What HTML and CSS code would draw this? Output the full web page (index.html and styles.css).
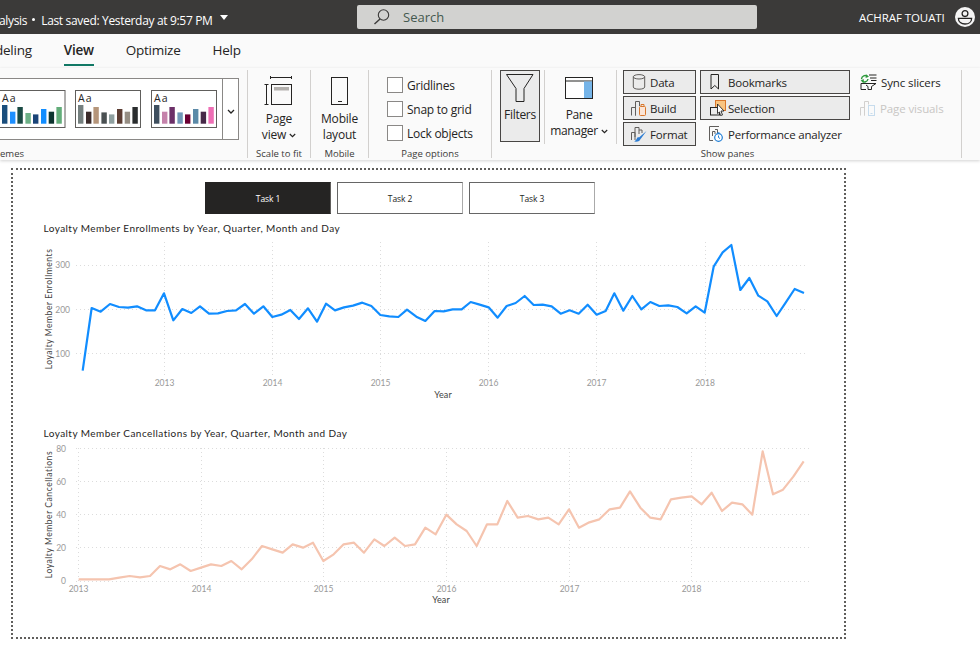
FILE: index.html
```html
<!DOCTYPE html>
<html lang="en">
<head>
<meta charset="utf-8">
<title>Power BI Desktop</title>
<link rel="stylesheet" href="styles.css">
</head>
<body>
<header class="topbar">
  <div class="doc-title"><span class="doc-clip">alysis</span><span class="doc-dot"></span><span>Last saved: Yesterday at 9:57 PM</span><span class="doc-caret"></span></div>
  <div class="search">
    <svg class="search-icon" width="18" height="18" viewBox="0 0 18 18"><circle cx="10.5" cy="7" r="5.2" fill="none" stroke="#3b3a39" stroke-width="1.1"/><path d="M7 11 L1.5 16" stroke="#3b3a39" stroke-width="1.4"/></svg>
    <span class="search-text">Search</span>
  </div>
  <div class="user">ACHRAF TOUATI</div>
  <svg class="avatar" width="20" height="20" viewBox="0 0 20 20"><circle cx="10" cy="10" r="10" fill="#f4f4f4"/><circle cx="10" cy="6.6" r="2.9" fill="none" stroke="#252423" stroke-width="1.3"/><path d="M3.4 11.4 H16.6 C16.6 15 13.6 17 10 17 C6.4 17 3.4 15 3.4 11.4 Z" fill="none" stroke="#252423" stroke-width="1.3"/></svg>
</header>

<nav class="tabs">
  <span class="tab tab-clip">deling</span>
  <span class="tab tab-active">View</span>
  <span class="tab">Optimize</span>
  <span class="tab">Help</span>
</nav>

<section class="ribbon">
  <div class="group group-themes">
    <div class="group-body">
      <div class="themes">
        <svg class="theme-cards" width="222" height="60" viewBox="0 79 222 60">
          <rect x="-10" y="90.5" width="75" height="37" fill="#fff" stroke="#605e5c"/>
          <text x="2" y="102" class="aa">Aa</text>
          <g>
            <rect x="2" y="105" width="5.4" height="18.7" fill="#1a4e7c"/><rect x="10" y="111.7" width="5.4" height="12" fill="#1f8fff"/><rect x="17.4" y="107" width="5.4" height="16.7" fill="#1a4a44"/><rect x="25.4" y="113" width="5.4" height="10.7" fill="#6cb086"/><rect x="33" y="114.4" width="5.4" height="9.3" fill="#1a4478"/><rect x="41" y="109" width="5.4" height="14.7" fill="#118dff"/><rect x="48.7" y="111.7" width="5.4" height="12" fill="#0e3530"/><rect x="56.4" y="107" width="5.4" height="16.7" fill="#63ad7a"/>
          </g>
          <rect x="75.5" y="90.5" width="65" height="37" fill="#fff" stroke="#605e5c"/>
          <text x="78" y="102" class="aa">Aa</text>
          <g>
            <rect x="78" y="105" width="5.4" height="18.7" fill="#75807f"/><rect x="86" y="111.7" width="5.4" height="12" fill="#3c2c2b"/><rect x="93.4" y="107" width="5.4" height="16.7" fill="#b5957a"/><rect x="101.4" y="112.4" width="5.4" height="11.3" fill="#4a5052"/><rect x="109" y="114.4" width="5.4" height="9.3" fill="#8fa0a0"/><rect x="117" y="109" width="5.4" height="14.7" fill="#5c3d33"/><rect x="124.7" y="111.7" width="5.4" height="12" fill="#968e84"/><rect x="132.4" y="107" width="5.4" height="16.7" fill="#2a2d2e"/>
          </g>
          <rect x="151.5" y="90.5" width="65" height="37" fill="#fff" stroke="#605e5c"/>
          <text x="154" y="102" class="aa">Aa</text>
          <g>
            <rect x="154" y="105" width="5.4" height="18.7" fill="#3f4f5e"/><rect x="162" y="111.7" width="5.4" height="12" fill="#c582ab"/><rect x="169.4" y="107" width="5.4" height="16.7" fill="#6c3068"/><rect x="177.4" y="112.4" width="5.4" height="11.3" fill="#7098b8"/><rect x="185" y="114.4" width="5.4" height="9.3" fill="#6b0033"/><rect x="193" y="109" width="5.4" height="14.7" fill="#5b8aa8"/><rect x="200.7" y="111.7" width="5.4" height="12" fill="#472948"/><rect x="208.4" y="107" width="5.4" height="16.7" fill="#ee6fb5"/>
          </g>
        </svg>
        <div class="themes-more"><svg width="8" height="5" viewBox="0 0 8 5"><path d="M1 1 L4 4 L7 1" fill="none" stroke="#252423" stroke-width="1.3"/></svg></div>
      </div>
    </div>
    <div class="group-label label-themes">emes</div>
  </div>

  <div class="group group-scale">
    <div class="group-body stack">
      <svg width="30" height="30" viewBox="0 0 30 30" class="big-icon"><path d="M6.5 1 V4 M27.5 1 V4 M6.5 2.5 H27.5 M.5 9.5 H4.5 M.5 29.5 H4.5 M2.5 9.5 V29.5" fill="none" stroke="#252423"/><rect x="7.5" y="9.5" width="20" height="20" fill="none" stroke="#252423"/><rect x="10" y="12" width="15" height="3.5" fill="#b3b0ad"/></svg>
      <div class="big-label">Page<br>view<svg class="mini-caret" width="7" height="5" viewBox="0 0 7 5"><path d="M.8 1 L3.5 3.6 L6.2 1" fill="none" stroke="#252423" stroke-width="1.2"/></svg></div>
    </div>
    <div class="group-label">Scale to fit</div>
  </div>

  <div class="group group-mobile">
    <div class="group-body stack">
      <svg width="18" height="29" viewBox="0 0 18 29" class="big-icon phone"><rect x=".5" y=".5" width="16" height="27" fill="none" stroke="#252423"/><path d="M7 24.5 H11" stroke="#252423"/></svg>
      <div class="big-label">Mobile<br>layout</div>
    </div>
    <div class="group-label">Mobile</div>
  </div>

  <div class="group group-options">
    <div class="group-body checks">
      <label class="check"><span class="box"></span>Gridlines</label>
      <label class="check"><span class="box"></span>Snap to grid</label>
      <label class="check"><span class="box"></span>Lock objects</label>
    </div>
    <div class="group-label">Page options</div>
  </div>

  <div class="group group-panes">
    <div class="group-body panes">
      <div class="filters">
        <svg width="28" height="29" viewBox="0 0 28 29"><path d="M.5 .5 H27 L18 14.5 V27.5 H10 V14.5 Z" fill="none" stroke="#252423"/></svg>
        <span class="filters-label">Filters</span>
      </div>
      <div class="pane-manager">
        <svg width="29" height="23" viewBox="0 0 29 23"><rect x=".5" y=".5" width="27" height="21" fill="#fff" stroke="#252423"/><path d="M.5 4 H27.5" stroke="#252423"/><rect x="19" y="4.5" width="8" height="16.5" fill="#75b4e8"/></svg>
        <div class="big-label">Pane<br>manager<svg class="mini-caret" width="7" height="5" viewBox="0 0 7 5"><path d="M.8 1 L3.5 3.6 L6.2 1" fill="none" stroke="#252423" stroke-width="1.2"/></svg></div>
      </div>
      <div class="show-grid">
        <div class="pbtn on">
          <svg width="14" height="16" viewBox="0 0 14 16"><ellipse cx="7" cy="2.8" rx="5.7" ry="2.2" fill="none" stroke="#605e5c"/><path d="M1.3 2.8 V13 C1.3 14.3 3.8 15.2 7 15.2 C10.2 15.2 12.7 14.3 12.7 13 V2.8" fill="none" stroke="#605e5c"/></svg>
          <span>Data</span>
        </div>
        <div class="pbtn on wide">
          <svg class="ic-book" width="10" height="16" viewBox="0 0 10 16"><path d="M1 .5 H8.5 V15 L4.8 11.5 L1 15 Z" fill="none" stroke="#252423"/></svg>
          <span class="bk-text">Bookmarks</span>
        </div>
        <div class="side-btn">
          <svg width="17" height="16" viewBox="0 0 17 16"><path d="M9 1 H16.5 M10 4 H16.5 M11 6.5 H16.5 M1 9.5 H16 L11.5 12.5 V15.5 H8 V12.5 L6 11 M1 9.5 V15.5 H6" fill="none" stroke="#252423"/><path d="M1.5 5 A3.6 3.6 0 0 1 7.5 2.5 M8 5 A3.6 3.6 0 0 1 2 7" fill="none" stroke="#2d9a3c" stroke-width="1.4"/><path d="M6 .2 L9 2.8 L5.6 4 Z M3.4 9 L.6 6 L4 5.2 Z" fill="#2d9a3c"/></svg>
          <span>Sync slicers</span>
        </div>
        <div class="pbtn on tight">
          <svg width="16" height="16" viewBox="0 0 16 16"><path d="M.5 15.5 V7.5 H4.5 V15.5 M4.5 15.5 V1.5 H8.5 V6" fill="none" stroke="#605e5c"/><rect x="8.5" y="6.5" width="6" height="9" rx="1" fill="#fbe5d6" stroke="#d9772b"/><path d="M10 6 V4.5 H13 V6" fill="none" stroke="#d9772b"/></svg>
          <span>Build</span>
        </div>
        <div class="pbtn on wide">
          <svg class="ic-sel" width="16" height="16" viewBox="0 0 16 16"><rect x="5.5" y=".5" width="10" height="10" fill="#f9c480" stroke="#d9772b"/><rect x=".5" y="7.5" width="9" height="7.5" fill="#ececec" stroke="#252423"/><path d="M7.5 4 L14 11 L11 11 L12.5 15 L10.5 15.5 L9.5 12 L7.5 13.5 Z" fill="#fff" stroke="#252423" stroke-width=".9"/></svg>
          <span class="bk-text sel-text">Selection</span>
        </div>
        <div class="side-btn off">
          <svg width="16" height="16" viewBox="0 0 16 16"><path d="M.5 15.5 V7.5 H4.5 V15.5 M4.5 15.5 V1.5 H8.5 V4.5" fill="none" stroke="#d2d0ce"/><rect x="8.5" y="5.5" width="6" height="10" fill="none" stroke="#c7dced"/><path d="M10.5 13.5 H12.5" stroke="#c7dced"/></svg>
          <span>Page visuals</span>
        </div>
        <div class="pbtn on tight">
          <svg width="16" height="16" viewBox="0 0 16 16"><path d="M.5 14 V6.5 H4 V14 M4 11 V1.5 H8 V8 M8 4 H11 V7" fill="none" stroke="#605e5c"/><path d="M15.5 5 L8 11.5 L7 11 C5.5 12 6 14 3 15.5 C7 16 9 15 9.5 13 L10 12.5 Z" fill="#2b7cd3"/></svg>
          <span>Format</span>
        </div>
        <div class="pbtn plain">
          <svg class="ic-perf" width="14" height="16" viewBox="0 0 14 16"><path d="M.5 .5 H10 M.5 .5 V14.5 H4 M3.5 10 V5.5 H6 V8 M6 3.5 H8.5 V7" fill="none" stroke="#605e5c"/><circle cx="9.5" cy="11.5" r="3.8" fill="#fff" stroke="#1c7cd5" stroke-width="1.2"/><path d="M9.5 9.5 V11.5 L11 12.5 M8.5 6.8 H10.5" fill="none" stroke="#1c7cd5"/></svg>
          <span>Performance analyzer</span>
        </div>
      </div>
    </div>
    <div class="group-label label-show">Show panes</div>
  </div>
</section>

<main class="page">
  <div class="task-tabs">
    <div class="task active">Task 1</div>
    <div class="task">Task 2</div>
    <div class="task">Task 3</div>
  </div>

  <svg class="chart chart-a" width="830" height="187" viewBox="13 218 830 187">
    <text x="43.5" y="232" class="c-title">Loyalty Member Enrollments by Year, Quarter, Month and Day</text>
    <g class="grid">
      <path d="M76 265.5 H808 M76 309.5 H808 M76 353.5 H808"/>
      <path d="M164.5 242 V375 M272.5 242 V375 M380.5 242 V375 M488.5 242 V375 M596.5 242 V375 M705.5 242 V375"/>
    </g>
    <g class="tick">
      <text x="70" y="268" text-anchor="end">300</text><text x="70" y="312.5" text-anchor="end">200</text><text x="70" y="357" text-anchor="end">100</text>
      <text x="164.5" y="386" text-anchor="middle">2013</text><text x="272.5" y="386" text-anchor="middle">2014</text><text x="380.5" y="386" text-anchor="middle">2015</text><text x="488.5" y="386" text-anchor="middle">2016</text><text x="596.5" y="386" text-anchor="middle">2017</text><text x="705" y="386" text-anchor="middle">2018</text>
    </g>
    <text x="443" y="398" class="a-title" text-anchor="middle">Year</text>
    <text transform="translate(52 309) rotate(-90)" class="a-title y-title" text-anchor="middle">Loyalty Member Enrollments</text>
    <g transform="translate(0 165) scale(.33333)">
      <polyline class="line line-blue" points="248,617 275,429 302,440 330,417 357,426 384,428 411,424 438,436 465,436 492,385 520,466 547,432 574,444 600,424 627,446 654,445 681,438 708,436 735,417 762,446 790,424 817,456 844,449 871,435 897,462 924,430 951,470 978,416 1005,436 1032,427 1059,422 1087,413 1114,423 1141,450 1168,454 1195,456 1221,434 1249,455 1276,468 1304,438 1331,439 1358,433 1385,433 1412,411 1439,419 1466,427 1493,458 1520,423 1547,414 1574,393 1601,420 1628,419 1655,424 1682,446 1709,436 1736,446 1763,419 1790,449 1817,438 1843,385 1870,437 1897,393 1924,433 1951,411 1978,423 2005,421 2032,426 2060,445 2087,424 2114,443 2141,305 2168,262 2194,240 2221,375 2248,339 2275,392 2302,409 2330,453 2357,413 2384,372 2412,384"/>
    </g>
  </svg>

  <svg class="chart chart-b" width="830" height="185" viewBox="13 420 830 185">
    <text x="43.5" y="437" class="c-title">Loyalty Member Cancellations by Year, Quarter, Month and Day</text>
    <g class="grid">
      <path d="M76 448.5 H810 M76 481.5 H810 M76 514.5 H810 M76 547.5 H810 M76 581.5 H810"/>
      <path d="M78.5 448 V581 M201.5 448 V581 M323.5 448 V581 M446.5 448 V581 M569.5 448 V581 M691.5 448 V581"/>
    </g>
    <g class="tick">
      <text x="66" y="451.5" text-anchor="end">80</text><text x="66" y="484.5" text-anchor="end">60</text><text x="66" y="518" text-anchor="end">40</text><text x="66" y="551" text-anchor="end">20</text><text x="66" y="584" text-anchor="end">0</text>
      <text x="78.5" y="591.5" text-anchor="middle">2013</text><text x="201.5" y="591.5" text-anchor="middle">2014</text><text x="323.5" y="591.5" text-anchor="middle">2015</text><text x="446.5" y="591.5" text-anchor="middle">2016</text><text x="569.5" y="591.5" text-anchor="middle">2017</text><text x="691.5" y="591.5" text-anchor="middle">2018</text>
    </g>
    <text x="441" y="603" class="a-title" text-anchor="middle">Year</text>
    <text transform="translate(52 514.5) rotate(-90)" class="a-title y-title" text-anchor="middle">Loyalty Member Cancellations</text>
    <g transform="translate(0 420) scale(.33333)">
      <polyline class="line line-peach" points="236,478 266,478 297,478 327,478 358,473 389,468 420,472 450,468 480,438 511,448 541,433 572,453 603,443 633,433 664,438 694,423 725,448 755,418 786,378 817,388 848,398 878,373 909,383 939,368 970,423 1001,403 1031,373 1062,368 1092,398 1123,358 1153,378 1184,353 1215,378 1245,373 1276,323 1307,343 1339,284 1370,313 1400,333 1430,378 1461,313 1492,313 1522,243 1553,293 1584,288 1615,298 1645,293 1676,313 1707,268 1737,323 1768,307 1798,298 1829,268 1860,263 1890,214 1921,263 1951,293 1982,298 2013,238 2044,233 2075,229 2105,253 2135,218 2166,273 2196,248 2227,253 2257,284 2288,94 2319,223 2349,209 2380,170 2411,124"/>
    </g>
  </svg>
</main>
</body>
</html>
```
FILE: styles.css
```css
* { box-sizing: border-box; }
html, body { margin: 0; height: 100%; }
body {
  width: 980px;
  height: 650px;
  overflow: hidden;
  background: #fff;
  color: #252423;
  font-family: "Open Sans", "Noto Sans", sans-serif;
  font-size: 12px;
}

/* title bar */
.topbar {
  display: flex;
  align-items: center;
  height: 34px;
  background: #3b3a39;
  color: #fff;
}
.doc-title {
  display: flex;
  align-items: center;
  width: 357px;
  height: 34px;
  padding-top: 6px;
  font-size: 12px;
  letter-spacing: -.33px;
  white-space: nowrap;
}
.doc-clip { margin-left: -1px; }
.doc-dot {
  width: 3px;
  height: 3px;
  margin: 0 6px 2px 5px;
  background: #fff;
  border-radius: 50%;
}
.doc-caret {
  width: 0;
  height: 0;
  margin: -6px 0 0 7px;
  border: 4.5px solid transparent;
  border-top: 5px solid #fff;
  border-bottom: 0;
}
.search {
  display: flex;
  align-items: center;
  width: 400px;
  height: 24px;
  padding-left: 16px;
  background: #d2d2d0;
  border-radius: 2px;
}
.search-text {
  margin-left: 12px;
  color: #44594f;
  font-size: 13px;
}
.user {
  margin-left: 102px;
  font-size: 11.5px;
  letter-spacing: -.08px;
  white-space: nowrap;
}
.avatar { margin-left: 10px; flex: none; }

/* tab strip */
.tabs {
  display: flex;
  height: 34px;
  background: #fafafa;
}
.tab {
  height: 30px;
  padding-top: 7px;
  margin-right: 32px;
  font-size: 13.5px;
  line-height: 19px;
  letter-spacing: -.25px;
}
.tab-clip { margin-left: -5px; }
.tab-active {
  font-weight: 600;
  border-bottom: 2px solid #117865;
  height: 32px;
}

/* ribbon */
.ribbon {
  display: flex;
  height: 92px;
  background: #fafafa;
  box-shadow: 0 1px 3px rgba(0,0,0,.18);
  position: relative;
}
.group {
  display: flex;
  flex-direction: column;
  align-items: center;
  height: 88px;
  margin-top: 2px;
  border-right: 1px solid #d2d0ce;
}
.group-body { height: 77px; width: 100%; }
.group-label {
  height: 11px;
  font-size: 9.5px;
  line-height: 14px;
  color: #3b3a39;
  white-space: nowrap;
}
.group-themes { width: 248px; }
.group-scale { width: 63px; }
.group-mobile { width: 58px; }
.group-options { width: 123px; }
.group-panes { width: 470px; }
.label-themes { align-self: flex-start; }
.label-show { margin-left: 2px; }

.themes {
  display: flex;
  width: 239px;
  height: 62px;
  margin-top: 8px;
  background: #fff;
  border: 1px solid #8a8886;
  border-left: 0;
}
.theme-cards { display: block; flex: none; }
.aa { font-size: 10.5px; letter-spacing: 1px; fill: #252423; font-family: "Open Sans", sans-serif; }
.themes-more {
  display: flex;
  align-items: center;
  justify-content: center;
  width: 16px;
  padding-top: 5px;
  border-left: 1px solid #8a8886;
}

.stack {
  display: flex;
  flex-direction: column;
  align-items: center;
}
.big-icon { margin-top: 5px; }
.big-label {
  margin-top: 6px;
  font-size: 12px;
  line-height: 16px;
  letter-spacing: -.2px;
  text-align: center;
  white-space: nowrap;
}
.phone { margin-top: 7px; }
.phone + .big-label { margin-top: 5px; }
.mini-caret { margin-left: 3px; vertical-align: 1px; }

.checks {
  display: flex;
  flex-direction: column;
  gap: 8px;
  padding: 7px 0 0 18px;
}
.check {
  display: flex;
  align-items: center;
  gap: 4px;
  height: 16px;
  font-size: 12px;
  letter-spacing: -.25px;
  white-space: nowrap;
}
.box {
  width: 16px;
  height: 16px;
  background: #fff;
  border: 1px solid #8a8886;
}

.panes {
  display: flex;
  position: relative;
}
.filters {
  display: flex;
  flex-direction: column;
  align-items: center;
  width: 40px;
  height: 72px;
  margin-left: 8px;
  padding-top: 3px;
  background: #ebebeb;
  border: 1px solid #484644;
}
.filters-label {
  margin-top: 3px;
  font-size: 12px;
  letter-spacing: -.3px;
}
.pane-manager {
  display: flex;
  flex-direction: column;
  align-items: center;
  width: 73px;
  height: 74px;
  margin-left: 4px;
  padding: 7px 3px 0 0;
  border-left: 1px solid #d2d0ce;
  border-right: 1px solid #d2d0ce;
}
.pane-manager .big-label { margin-top: 7px; letter-spacing: -.35px; }
.show-grid {
  display: grid;
  grid-template-columns: 73px 150px auto;
  grid-auto-rows: 24px;
  gap: 2px 4px;
  margin-left: 6px;
}
.pbtn {
  display: flex;
  align-items: center;
  gap: 4px;
  padding-left: 8px;
  font-size: 11.5px;
  letter-spacing: -.2px;
  white-space: nowrap;
}
.tight { padding-left: 7px; gap: 3px; }
.on {
  background: #ebebeb;
  border: 1px solid #484644;
}
.plain { grid-column: 2; padding-left: 9px; gap: 5px; }
.wide { padding-left: 9px; gap: 5px; }
.bk-text { margin-left: 3px; }
.sel-text { margin-left: -3px; }
.side-btn {
  display: flex;
  align-items: center;
  gap: 4px;
  margin-left: 6px;
  font-size: 11.5px;
  letter-spacing: -.12px;
  white-space: nowrap;
}
.off { color: #c8c6c4; }

/* report page */
.page {
  width: 835px;
  height: 471px;
  margin: 8px 0 0 11px;
  padding-top: 12px;
  background: #fff;
  border: 2px dotted #605e5c;
}
.task-tabs {
  display: flex;
  gap: 6px;
  height: 32px;
  padding-left: 192px;
}
.task {
  display: flex;
  align-items: center;
  justify-content: center;
  width: 126px;
  font-size: 8.5px;
  letter-spacing: -.1px;
  border: 1px solid #666;
  border-right-color: #aaa;
  border-bottom-color: #666;
}
.task.active {
  background: #252423;
  color: #fff;
  border-color: #252423;
  border-right-color: #605e5c;
}
.chart { display: block; }
.chart-a { margin-top: 4px; }
.chart-b { margin-top: 15px; }
.chart text { font-family: Lato, Roboto, sans-serif; }
.chart .c-title { font-size: 10px; letter-spacing: .44px; fill: #252423; }
.chart .a-title { font-size: 9px; fill: #444; letter-spacing: .1px; }
.chart .y-title { font-size: 8.5px; letter-spacing: .55px; }
.tick { font-size: 8.5px; fill: #999; }
.grid path {
  fill: none;
  stroke: #dcdcdc;
  stroke-width: 1;
  stroke-dasharray: 1 3;
}
.line {
  fill: none;
  stroke-width: 6.6;
  stroke-linejoin: round;
}
.line-blue { stroke: #118dff; }
.line-peach { stroke: #f5c4af; }
```
